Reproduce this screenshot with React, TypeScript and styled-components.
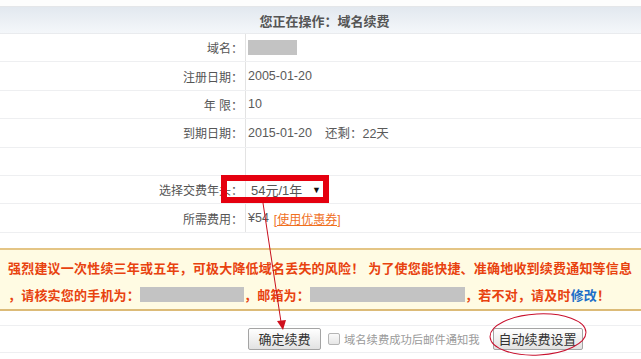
import React from "react";
import styled, { createGlobalStyle } from "styled-components";

const GlobalStyle = createGlobalStyle`
  html, body {
    margin: 0;
    padding: 0;
    background: #ffffff;
  }
  body {
    font-family: "Liberation Sans", "Noto Sans CJK SC", sans-serif;
    color: #555;
  }
`;

const Page = styled.div`
  position: relative;
  width: 641px;
  height: 359px;
  overflow: hidden;
  background: #fff;
`;

const TopStrip = styled.div`
  height: 6px;
  border-bottom: 1px solid #e4e6e9;
  background: #fdfdfd;
`;

const Header = styled.div`
  height: 26px;
  display: flex;
  align-items: center;
  justify-content: center;
  padding-left: 8px;
  background: linear-gradient(#e2e8ef, #f4f7fa);
  border-bottom: 1px solid #e9ebee;
  font-size: 13px;
  font-weight: bold;
  color: #555;
  box-sizing: border-box;
  height: 27px;
`;

const Table = styled.div`
  display: flex;
  flex-direction: column;
`;

const Row = styled.div`
  display: grid;
  grid-template-columns: 246px 1fr;
  height: 28.4px;
  box-sizing: border-box;
  border-bottom: 1px solid #eeeff1;
  background: #fff;
`;

const Label = styled.div`
  display: flex;
  align-items: center;
  justify-content: flex-end;
  padding-right: 2px;
  font-size: 12px;
  color: #555;
  border-right: 1px solid #e3e3e3;
  white-space: nowrap;
`;

const Value = styled.div`
  display: flex;
  align-items: center;
  gap: 4px;
  padding-left: 2px;
  font-size: 12.5px;
  color: #5a5a5a;
  white-space: nowrap;
`;

const Remain = styled.span`
  margin-left: 9px;
`;

const Redacted = styled.span<{ w: number }>`
  display: inline-block;
  width: ${(p) => p.w}px;
  height: 15px;
  background: #c3c3c3;
  vertical-align: middle;
`;

const SelectBox = styled.div`
  display: flex;
  align-items: center;
  justify-content: space-between;
  width: 70px;
  margin-left: 3px;
  font-size: 13px;
  color: #555;
`;

const Caret = styled.span`
  font-size: 9px;
  color: #111;
`;

const Coupon = styled.a`
  color: #f0701e;
  text-decoration: underline;
  font-size: 12px;
  margin-left: 1px;
`;

const Spacer = styled.div<{ h: number }>`
  height: ${(p) => p.h}px;
`;

const Warning = styled.div`
  background: #fffbe3;
  border-top: 2px solid #e4c585;
  border-bottom: 2px solid #dcbb78;
  padding: 4px 0 4px 8px;
  font-size: 13px;
  font-weight: bold;
  color: #e8420f;
  letter-spacing: 0.2px;
  height: 63px;
  box-sizing: border-box;
`;

const WarnLine = styled.div`
  display: flex;
  align-items: center;
  height: 27px;
  white-space: nowrap;
`;

const FixLink = styled.a`
  color: #1d6fc8;
  text-decoration: none;
`;

const ActionRow = styled.div`
  display: flex;
  align-items: center;
  height: 28px;
  box-sizing: border-box;
  border-top: 1px solid #eeeff1;
  border-bottom: 1px solid #eeeff1;
  padding-left: 248px;
`;

const Button = styled.button<{ w: number }>`
  width: ${(p) => p.w}px;
  height: 22px;
  padding: 0;
  border: 1px solid #a4a4a4;
  border-radius: 2px;
  background: linear-gradient(#ffffff, #e2e2e2);
  font-family: "Noto Sans CJK SC", sans-serif;
  font-size: 13px;
  color: #333;
`;

const Check = styled.span`
  display: inline-block;
  width: 10px;
  height: 10px;
  margin-left: 7px;
  border: 1px solid #b5b5b5;
  border-radius: 2px;
  background: linear-gradient(#fafafa, #e6e6e6);
`;

const CheckText = styled.span`
  margin-left: 4px;
  margin-right: 13px;
  font-size: 11.3px;
  color: #9a9a9a;
`;

const RedFrame = styled.div`
  position: absolute;
  left: 221px;
  top: 175px;
  width: 108px;
  height: 28px;
  box-sizing: border-box;
  border: 6px solid #e5000f;
`;

const Overlay = styled.svg`
  position: absolute;
  left: 0;
  top: 0;
  pointer-events: none;
`;

export default function App() {
  return (
    <>
      <GlobalStyle />
      <Page>
        <TopStrip />
        <Header>您正在操作：域名续费</Header>
        <Table>
          <Row>
            <Label>域名：</Label>
            <Value>
              <Redacted w={49} />
            </Value>
          </Row>
          <Row>
            <Label>注册日期：</Label>
            <Value>2005-01-20</Value>
          </Row>
          <Row>
            <Label>年 限：</Label>
            <Value>10</Value>
          </Row>
          <Row>
            <Label>到期日期：</Label>
            <Value>
              2015-01-20<Remain>还剩：22天</Remain>
            </Value>
          </Row>
          <Row>
            <Label />
            <Value />
          </Row>
          <Row>
            <Label>选择交费年头：</Label>
            <Value>
              <SelectBox>
                54元/1年 <Caret>▼</Caret>
              </SelectBox>
            </Value>
          </Row>
          <Row>
            <Label>所需费用：</Label>
            <Value>
              ¥54 <Coupon>[使用优惠券]</Coupon>
            </Value>
          </Row>
        </Table>
        <Spacer h={15} />
        <Warning>
          <WarnLine>
            强烈建议一次性续三年或五年，可极大降低域名丢失的风险！ 为了使您能快捷、准确地收到续费通知等信息
          </WarnLine>
          <WarnLine>
            ，请核实您的手机为：<Redacted w={104} />，邮箱为：<Redacted w={155} />，若不对，请及时
            <FixLink>修改</FixLink>！
          </WarnLine>
        </Warning>
        <Spacer h={14} />
        <ActionRow>
          <Button w={73}>确定续费</Button>
          <Check />
          <CheckText>域名续费成功后邮件通知我</CheckText>
          <Button w={90}>自动续费设置</Button>
        </ActionRow>
        <RedFrame />
        <Overlay width={641} height={359} viewBox="0 0 641 359">
          <line x1={263} y1={203} x2={281} y2={322} stroke="#c8101e" strokeWidth={1} />
          <polygon points="277,321 286,320 283,330" fill="#d0101e" />
          <ellipse
            cx={538}
            cy={334.5}
            rx={48}
            ry={20.5}
            fill="none"
            stroke="#c8102e"
            strokeWidth={1}
            transform="rotate(-3 538 334.5)"
          />
        </Overlay>
      </Page>
    </>
  );
}
